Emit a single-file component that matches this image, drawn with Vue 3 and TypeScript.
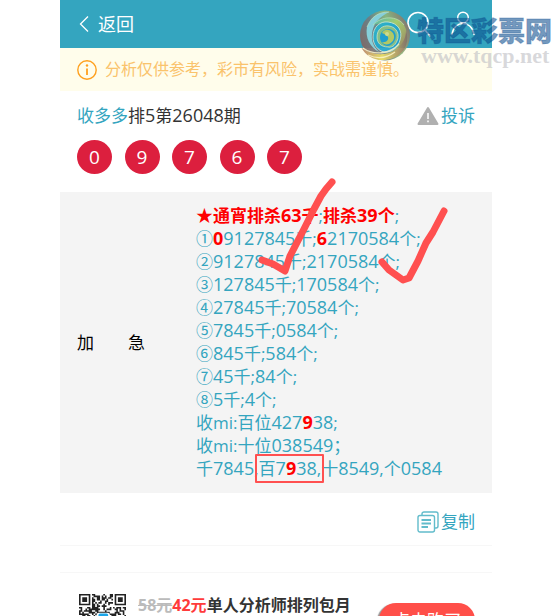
<script setup lang="ts">
interface Run {
  text: string
  hot?: boolean
}

interface Piece extends Run {
  digits: boolean
}

const balls: number[] = [0, 9, 7, 6, 7]

const rows: Run[][] = [
  [{ text: '★通宵排杀63千', hot: true }, { text: ';' }, { text: '排杀39个', hot: true }, { text: ';' }],
  [{ text: '①' }, { text: '0', hot: true }, { text: '9127845千;' }, { text: '6', hot: true }, { text: '2170584个;' }],
  [{ text: '②9127845千;2170584个;' }],
  [{ text: '③127845千;170584个;' }],
  [{ text: '④27845千;70584个;' }],
  [{ text: '⑤7845千;0584个;' }],
  [{ text: '⑥845千;584个;' }],
  [{ text: '⑦45千;84个;' }],
  [{ text: '⑧5千;4个;' }],
  [{ text: '收mi:百位427' }, { text: '9', hot: true }, { text: '38;' }],
  [{ text: '收mi:十位038549；' }],
  [{ text: '千7845,百7' }, { text: '9', hot: true }, { text: '38,十8549,个0584' }],
]

// Figures are set one step larger than the characters around them.
function split(runs: Run[]): Piece[] {
  return runs.flatMap((run) =>
    (run.text.match(/[0-9]+|[^0-9]+/g) ?? []).map((text) => ({
      text,
      hot: run.hot,
      digits: /^[0-9]/.test(text),
    })),
  )
}

const title: Piece[] = split([{ text: '排5第26048期' }])
const lines: Piece[][] = rows.map(split)

const size = 29

function finder(x: number, y: number): boolean | null {
  for (const [fx, fy] of [[0, 0], [size - 7, 0], [0, size - 7]]) {
    const dx = x - fx
    const dy = y - fy
    if (dx >= -1 && dx <= 7 && dy >= -1 && dy <= 7) {
      const ring = Math.max(Math.abs(dx - 3), Math.abs(dy - 3))
      return ring === 3 || ring <= 1
    }
  }
  return null
}

function buildCode(): string {
  let seed = 977
  let d = ''
  for (let y = 0; y < size; y++) {
    for (let x = 0; x < size; x++) {
      seed = (seed * 1103515245 + 12345) % 2147483648
      const on = finder(x, y) ?? seed / 2147483648 > 0.46
      if (on) d += `M${x} ${y}h1v1h-1z`
    }
  }
  return d
}

const code: string = buildCode()
</script>

<template>
  <main class="page">
    <header class="bar">
      <a class="back" href="#">
        <svg width="10" height="18" viewBox="0 0 10 18" aria-hidden="true">
          <path d="M9 1.5 1.5 9 9 16.500" fill="none" stroke="currentColor" stroke-width="1.300" />
        </svg>
        返回
      </a>
      <nav class="tools">
        <button type="button" aria-label="搜索">
          <svg width="26" height="28" viewBox="0 0 26 28" aria-hidden="true">
            <g fill="none" stroke="currentColor" stroke-width="1.600" stroke-linecap="round">
              <circle cx="12" cy="12.500" r="10" />
              <path d="m19 20 5 6" />
            </g>
          </svg>
        </button>
        <button type="button" aria-label="我的">
          <svg width="26" height="28" viewBox="0 0 26 28" aria-hidden="true">
            <g fill="none" stroke="currentColor" stroke-width="1.500" stroke-linecap="round">
              <circle cx="13" cy="7.500" r="5.300" />
              <path d="M2 24.500C3 17 8 13.500 13 13.500S23 17 24 24.500" />
            </g>
          </svg>
        </button>
      </nav>
    </header>

    <p class="notice">
      <svg width="20" height="20" viewBox="0 0 20 20" aria-hidden="true">
        <circle cx="10" cy="10" r="9.200" fill="none" stroke="#ffa01e" stroke-width="1.400" />
        <path d="M10 8.500v6.500" stroke="#ffa01e" stroke-width="1.800" />
        <circle cx="10" cy="5.500" r="1.200" fill="#ffa01e" />
      </svg>
      <span>分析仅供参考，彩市有风险，实战需谨慎。</span>
    </p>

    <section class="issue">
      <div class="heading">
        <h1>
          <a href="#">收多多</a><span v-for="(p, i) in title" :key="i" :class="{ num: p.digits }">{{ p.text }}</span>
        </h1>
        <a class="action" href="#">
          <svg width="22" height="20" viewBox="0 0 22 20" aria-hidden="true">
            <path d="M11 2 20.500 18h-19z" fill="#b0b0b0" stroke="#b0b0b0" stroke-width="2" stroke-linejoin="round" />
            <path d="M11 7v6M11 14.500v1.800" stroke="#fff" stroke-width="1.500" />
          </svg>
          投诉
        </a>
      </div>
      <ol class="balls">
        <li v-for="(ball, i) in balls" :key="i">{{ ball }}</li>
      </ol>
    </section>

    <section class="plan">
      <h2><span>加</span><span>急</span></h2>
      <div class="lines">
        <p v-for="(line, i) in lines" :key="i">
          <span v-for="(p, j) in line" :key="j" :class="{ num: p.digits, hot: p.hot }">{{ p.text }}</span>
        </p>
      </div>
      <svg class="marks" width="432" height="301" viewBox="0 0 432 301" aria-hidden="true">
        <g fill="none" stroke="#ff5050" stroke-linejoin="round" stroke-linecap="round">
          <path stroke-width="7" d="M202 68 213 72 225 79 230 64 244 37 254 17 261 4 266-3 272-10" />
          <path stroke-width="7" d="M322 70 329 78 343 88 349 86 358 69 366 51 373 40 384 19" />
          <rect x="196" y="263" width="67" height="27" stroke-width="2" />
        </g>
      </svg>
    </section>

    <div class="copy">
      <button class="action" type="button">
        <svg width="22" height="22" viewBox="0 0 22 22" aria-hidden="true">
          <g fill="none" stroke="#62bccb" stroke-width="1.400">
            <path d="M5 4V3a2 2 0 0 1 2-2h12a2 2 0 0 1 2 2v12a2 2 0 0 1-2 2h-1" />
            <rect x="1" y="4.500" width="16.500" height="16.500" rx="2" />
            <path d="M4.500 9h9.500M4.500 12.500h9.500M4.500 16h6.500" stroke-width="1.800" />
          </g>
        </svg>
        复制
      </button>
    </div>

    <section class="offer">
      <svg class="code" width="47" height="47" :viewBox="`0 0 ${size} ${size}`" role="img" aria-label="二维码">
        <path :d="code" fill="#222" />
        <rect x="11" y="11.500" width="8" height="8" rx="1" fill="#fff" />
        <rect x="12" y="12" width="6" height="6" rx="1" fill="#1ba5e8" />
      </svg>
      <p><s>58元</s><em>42元</em>单人分析师排列包月</p>
      <button class="buy" type="button">点击购买</button>
    </section>

    <div class="brand">
      <svg width="52" height="52" viewBox="0 0 52 52" aria-hidden="true">
        <defs>
          <linearGradient id="rim" x1="0" y1="0.700" x2="1" y2="0.300">
            <stop offset="0" stop-color="#86645f" />
            <stop offset="0.350" stop-color="#6d7f84" />
            <stop offset="0.650" stop-color="#8fb87c" />
            <stop offset="1" stop-color="#8c7068" />
          </linearGradient>
          <linearGradient id="lime" x1="0" y1="0" x2="1" y2="1">
            <stop offset="0" stop-color="#4fb9b4" />
            <stop offset="0.400" stop-color="#aed067" />
            <stop offset="1" stop-color="#a5785c" />
          </linearGradient>
          <linearGradient id="core" x1="0" y1="0" x2="1" y2="1">
            <stop offset="0" stop-color="#35b6c6" />
            <stop offset="1" stop-color="#1497d0" />
          </linearGradient>
          <linearGradient id="tail" x1="0" y1="0" x2="1" y2="0">
            <stop offset="0" stop-color="#b5806a" />
            <stop offset="0.450" stop-color="#e3d95f" />
            <stop offset="1" stop-color="#8a7062" />
          </linearGradient>
        </defs>
        <circle cx="26" cy="25.500" r="25" fill="url(#rim)" />
        <path d="M8 17C12 7 19 2 30 2 20 7 14 14 13 24c-1 7 2 13 7 18C11 37 6 28 8 17z" fill="#8ed3dd" />
        <path d="M14 15C21 6 38 5 45 15c6 10 2 22-9 29 6-8 7-17 2-23-6-9-16-9-24-6z" fill="url(#lime)" />
        <path d="M14 27c0-10 7-16 15-15 10 1 15 9 12 18-2 8-9 13-16 12-7-2-11-8-11-15z" fill="url(#core)" stroke="#d9efe0" stroke-width="0.800" />
        <path d="M18 27c0-8 6-12 12-11 8 1 11 9 8 15-2 5-6 7-9 6-7 0-11-4-11-10z" fill="#8fc282" stroke="#e3f1cf" stroke-width="0.700" />
        <path d="M21 27c0-5 4-8 9-8 6 1 8 6 6 11-2 4-5 6-8 6-4-1-7-4-7-9z" fill="#1f9fd0" />
        <path d="M23 23c2-4 7-4 10-1 4 4 2 10-3 12-3 1-6 0-7-2 4 1 7-2 6-5-1-2-4-3-6-4z" fill="#bccb5e" />
        <circle cx="28" cy="24" r="2" fill="#dbe08a" />
        <path d="M2 37c10 9 28 10 38 0 5-5 7-11 7-17 4 13-2 24-13 28C22 53 8 49 2 37z" fill="url(#tail)" />
        <path d="M4 38c11 8 27 6 36-4M9 45c9 4 19 3 27-3" fill="none" stroke="#fbf4c8" stroke-width="1.300" opacity="0.850" />
        <path d="M8 17C12 7 19 2 30 2M14 15c8-9 24-10 31 0" fill="none" stroke="#d5eac1" stroke-width="0.800" opacity="0.800" />
      </svg>
      <div class="names">
        <strong>特区彩票网</strong>
        <span>www.tqcp.net</span>
      </div>
    </div>
  </main>
</template>

<style>
body {
  margin: 0;
  background: #fff;
}
</style>

<style scoped>
.page {
  position: relative;
  box-sizing: border-box;
  height: 100vh;
  overflow: hidden;
  padding: 0 68px 0 60px;
  font-family: "Open Sans", "Noto Sans CJK SC", sans-serif;
  font-size: 17px;
  line-height: 23px;
  color: #333;
}

h1,
h2,
p,
ol {
  margin: 0;
  padding: 0;
  font-size: inherit;
  font-weight: 400;
}

a {
  color: #34a5bf;
  text-decoration: none;
}

button {
  padding: 0;
  border: 0;
  background: none;
  font: inherit;
}

svg {
  display: block;
  flex: none;
}

.num {
  font-size: 18px;
}

.bar {
  display: flex;
  align-items: center;
  justify-content: space-between;
  height: 48px;
  padding: 0 16px 0 19px;
  background: #34a5bf;
}

.back {
  display: flex;
  align-items: center;
  gap: 9px;
  font-size: 18px;
  color: #fff;
}

.tools {
  display: flex;
  gap: 18px;
}

.tools button {
  color: #fff;
}

.notice {
  display: flex;
  align-items: center;
  gap: 8px;
  height: 43px;
  padding-left: 17px;
  background: #fffdeb;
  font-size: 16px;
  color: #fac36c;
  white-space: nowrap;
}

.issue {
  padding: 13px 17px 18px;
}

.heading {
  display: flex;
  align-items: center;
  justify-content: space-between;
}

.action {
  display: flex;
  align-items: center;
  gap: 2px;
  color: #34a5bf;
}

.balls {
  display: flex;
  justify-content: space-between;
  width: 225px;
  margin-top: 13px;
  list-style: none;
}

.balls li {
  width: 35px;
  height: 34px;
  border-radius: 50%;
  background: #dc1f3e;
  font-size: 19px;
  font-weight: 500;
  line-height: 35px;
  text-align: center;
  color: #fff;
}

.plan {
  position: relative;
  display: flex;
  align-items: center;
  padding: 12px 0 13px 17px;
  background: #f4f4f4;
}

.plan h2 {
  display: flex;
  flex: none;
  gap: 34px;
  width: 119px;
  color: #000;
}

.lines {
  color: #34a5bf;
  white-space: nowrap;
}

.lines p {
  height: 23px;
}

.hot {
  font-weight: 700;
  color: #f00;
}

.marks {
  position: absolute;
  top: 0;
  left: 0;
  overflow: visible;
}

.copy {
  display: flex;
  justify-content: flex-end;
  padding: 17px 17px 12px;
  border-bottom: 1px solid #f7f7f7;
}

.offer {
  display: flex;
  align-items: flex-start;
  margin-top: 26px;
  padding: 21px 17px 0 19px;
  border-top: 1px solid #f7f7f7;
  white-space: nowrap;
}

.offer p {
  flex: 1;
  margin-left: 12px;
  font-size: 16px;
  font-weight: 700;
}

.offer s {
  color: #bbb;
}

.offer em {
  font-style: normal;
  color: #ff3b3b;
}

.buy {
  height: 34px;
  margin-top: 9px;
  padding: 0 14px;
  border-radius: 17px;
  background: #ff4f49;
  box-shadow: -2px 1px 1px #999;
  color: #fff;
}

.brand {
  position: absolute;
  top: 10px;
  right: 8px;
  display: flex;
  gap: 6px;
  pointer-events: none;
}

.brand > svg {
  opacity: 0.920;
}

.names {
  display: flex;
  flex-direction: column;
  width: 135px;
  padding-top: 4px;
  white-space: nowrap;
}

.names strong {
  font-family: "Noto Sans CJK SC", sans-serif;
  font-size: 27px;
  font-weight: 900;
  line-height: 32px;
  color: rgba(9, 75, 140, 0.560);
  -webkit-text-stroke: 1px rgba(9, 75, 140, 0.300);
}

.names span {
  margin-left: 4px;
  font-family: "Liberation Serif", serif;
  font-size: 22px;
  font-weight: 700;
  line-height: 20px;
  color: rgba(190, 190, 195, 0.600);
}
</style>
